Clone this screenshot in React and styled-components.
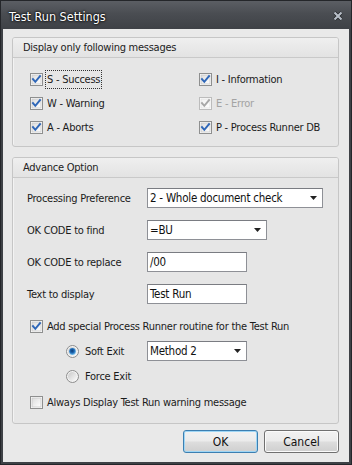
import React from 'react';
import styled, { createGlobalStyle, css } from 'styled-components';

const GlobalStyle = createGlobalStyle`
  html, body { margin: 0; padding: 0; background: #3b3e43; }
  body {
    font-family: "DejaVu Sans Condensed", "DejaVu Sans", sans-serif;
    font-stretch: condensed;
    font-size: 11px;
    letter-spacing: -0.25px;
    color: #1b1b1b;
  }
`;

const Window = styled.div`
  width: 352px;
  height: 465px;
  box-sizing: border-box;
  display: flex;
  flex-direction: column;
  background: #3e4146;
  border: 1px solid #24262a;
  padding: 0 2px 2px;
`;

const TitleBar = styled.div`
  height: 28px;
  flex: none;
  display: flex;
  align-items: center;
  justify-content: space-between;
  padding: 0 8px 0 8px;
  margin: 0 -2px;
  background: linear-gradient(#5b5e64 0%, #4a4d52 45%, #3e4146 100%);
  box-sizing: border-box;
`;

const Title = styled.span`
  color: #ffffff;
  font-size: 12.5px;
  letter-spacing: 0;
  padding-top: 2px;
  text-shadow: 0 0 3px #000, 0 0 2px #000;
`;

const CloseButton = styled.span`
  display: flex;
  width: 10px;
  height: 10px;
  margin-top: 1px;
`;

const Client = styled.div`
  flex: 1;
  display: flex;
  flex-direction: column;
  background: #e9e9e9;
  padding: 8px 10px 9px 9px;
  box-sizing: border-box;
`;

const Group = styled.section`
  border: 1px solid #c6c6c6;
  border-radius: 3px;
  background: #e6e6e6;
  display: flex;
  flex-direction: column;
  margin-bottom: ${p => p.$gap || 0}px;
  box-shadow: inset 1px 1px 0 #f3f3f3;
`;

const GroupHeader = styled.div`
  height: 19px;
  border-bottom: 1px solid #c9c9c9;
  background: linear-gradient(#efefef, #e3e3e3);
  border-radius: 2px 2px 0 0;
  padding-left: 10px;
  display: flex;
  align-items: center;
  color: #222;
`;

const MessageGrid = styled.div`
  display: grid;
  grid-template-columns: 169px 1fr;
  grid-auto-rows: 24px;
  padding: 9px 0 7px 17px;
`;

const AdvanceBody = styled.div`
  display: flex;
  flex-direction: column;
  padding: 10px 0 11px 14px;
`;

const FormRow = styled.div`
  display: flex;
  align-items: center;
  height: 20px;
  margin-bottom: 12px;
`;

const Label = styled.span`
  width: 120px;
  flex: none;
`;

const OptionRow = styled.div`
  display: flex;
  align-items: center;
  height: 20px;
  margin-top: ${p => p.$top || 0}px;
  padding-left: ${p => p.$indent || 0}px;
`;

const CheckRow = styled.label`
  display: flex;
  align-items: center;
  height: 100%;
  color: ${p => (p.$disabled ? '#a3a3a3' : '#1b1b1b')};
`;

const BoxText = styled.span`
  margin-left: 2px;
  padding: 2px 1px;
  border: 1px dotted ${p => (p.$focus ? '#333' : 'transparent')};
`;

const RadioText = styled.span`
  margin-left: 6px;
  width: 62px;
  flex: none;
`;

const fieldBase = css`
  height: 20px;
  box-sizing: border-box;
  background: #fff;
  border: 1px solid #8e9096;
  border-top-color: #7a7c82;
  display: flex;
  align-items: center;
  padding-left: 2px;
  font-size: 11.5px;
  color: #111;
`;

const TextField = styled.div`
  ${fieldBase};
  width: ${p => p.$w}px;
`;

const Select = styled.div`
  ${fieldBase};
  width: ${p => p.$w}px;
  justify-content: space-between;
  padding-right: 5px;
`;

const Footer = styled.div`
  display: flex;
  justify-content: flex-end;
  gap: 6px;
  margin-top: 6px;
`;

const Button = styled.button`
  width: 75px;
  height: 23px;
  font: inherit;
  font-size: 12px;
  letter-spacing: 0;
  color: #111;
  border-radius: 3px;
  border: 1px solid ${p => (p.$default ? '#3c7fb1' : '#707070')};
  background: linear-gradient(#f2f2f2 0%, #ebebeb 48%, #dddddd 52%, #cfcfcf 100%);
  box-shadow: inset 0 0 0 1px ${p => (p.$default ? '#9fd6f5' : '#fbfbfb')};
  padding: 0;
`;

const Check = ({ checked = true, disabled = false }) => {
  const edge = disabled ? '#bcbcbc' : '#8e8f8f';
  const mark = disabled ? '#a8a8a8' : '#2f67b8';
  return (
    <svg width="13" height="13" viewBox="0 0 13 13" style={{ flex: 'none' }}>
      <defs>
        <linearGradient id={disabled ? 'cbd' : 'cbn'} x1="0" y1="0" x2="1" y2="1">
          <stop offset="0" stopColor={disabled ? '#f2f2f2' : '#dcdcdc'} />
          <stop offset="1" stopColor="#ffffff" />
        </linearGradient>
      </defs>
      <rect x="0.5" y="0.5" width="12" height="12" fill="#fff" stroke={edge} />
      <rect x="2" y="2" width="9" height="9" fill={`url(#${disabled ? 'cbd' : 'cbn'})`} stroke={disabled ? '#e0e0e0' : '#c8c8c8'} strokeWidth="0.8" />
      {checked && (
        <path d="M3 6.2 L5.3 8.8 L10 3.2" fill="none" stroke={mark} strokeWidth="2" strokeLinecap="square" />
      )}
    </svg>
  );
};

const Radio = ({ checked }) => (
  <svg width="13" height="13" viewBox="0 0 13 13" style={{ flex: 'none' }}>
    <defs>
      <linearGradient id="rbg" x1="0" y1="0" x2="1" y2="1">
        <stop offset="0" stopColor="#c9c9c9" />
        <stop offset="1" stopColor="#fbfbfb" />
      </linearGradient>
      <radialGradient id="rdot" cx="0.45" cy="0.4" r="0.6">
        <stop offset="0" stopColor="#0b3a74" />
        <stop offset="0.55" stopColor="#1f6cb8" />
        <stop offset="1" stopColor="#7cc4ef" />
      </radialGradient>
    </defs>
    <circle cx="6.5" cy="6.5" r="6" fill="#f4f4f4" stroke="#8c8c8c" />
    <circle cx="6.5" cy="6.5" r="4.5" fill="url(#rbg)" />
    {checked && <circle cx="6.5" cy="6.5" r="3.4" fill="url(#rdot)" />}
  </svg>
);

const Arrow = () => (
  <svg width="7" height="4" viewBox="0 0 7 4">
    <path d="M0 0 H7 L3.5 4 Z" fill="#222" />
  </svg>
);

const CheckItem = ({ label, disabled, focus, checked = true }) => (
  <CheckRow $disabled={disabled}>
    <Check checked={checked} disabled={disabled} />
    <BoxText $focus={focus}>{label}</BoxText>
  </CheckRow>
);

export default function App() {
  return (
    <>
      <GlobalStyle />
      <Window>
        <TitleBar>
          <Title>Test Run Settings</Title>
          <CloseButton>
            <svg width="10" height="10" viewBox="0 0 10 10">
              <path d="M1.5 1.5 L8.5 8.5 M8.5 1.5 L1.5 8.5" stroke="#1e2023" strokeWidth="3.4" />
              <path d="M1.5 1.5 L8.5 8.5 M8.5 1.5 L1.5 8.5" stroke="#b7bec7" strokeWidth="2.2" />
            </svg>
          </CloseButton>
        </TitleBar>
        <Client>
          <Group $gap={10}>
            <GroupHeader>Display only following messages</GroupHeader>
            <MessageGrid>
              <CheckItem label="S - Success" focus />
              <CheckItem label="I - Information" />
              <CheckItem label="W - Warning" />
              <CheckItem label="E - Error" disabled />
              <CheckItem label="A - Aborts" />
              <CheckItem label="P - Process Runner DB" />
            </MessageGrid>
          </Group>
          <Group>
            <GroupHeader>Advance Option</GroupHeader>
            <AdvanceBody>
              <FormRow>
                <Label>Processing Preference</Label>
                <Select $w={176}>2 - Whole document check<Arrow /></Select>
              </FormRow>
              <FormRow>
                <Label>OK CODE to find</Label>
                <Select $w={120}>=BU<Arrow /></Select>
              </FormRow>
              <FormRow>
                <Label>OK CODE to replace</Label>
                <TextField $w={100}>/00</TextField>
              </FormRow>
              <FormRow>
                <Label>Text to display</Label>
                <TextField $w={100}>Test Run</TextField>
              </FormRow>
              <OptionRow $indent={3}>
                <CheckItem label="Add special Process Runner routine for the Test Run" />
              </OptionRow>
              <OptionRow $indent={39} $top={5}>
                <Radio checked />
                <RadioText>Soft Exit</RadioText>
                <Select $w={100}>Method 2<Arrow /></Select>
              </OptionRow>
              <OptionRow $indent={39} $top={5}>
                <Radio />
                <RadioText>Force Exit</RadioText>
              </OptionRow>
              <OptionRow $indent={3} $top={6}>
                <CheckItem label="Always Display Test Run warning message" checked={false} />
              </OptionRow>
            </AdvanceBody>
          </Group>
          <Footer>
            <Button $default>OK</Button>
            <Button>Cancel</Button>
          </Footer>
        </Client>
      </Window>
    </>
  );
}
